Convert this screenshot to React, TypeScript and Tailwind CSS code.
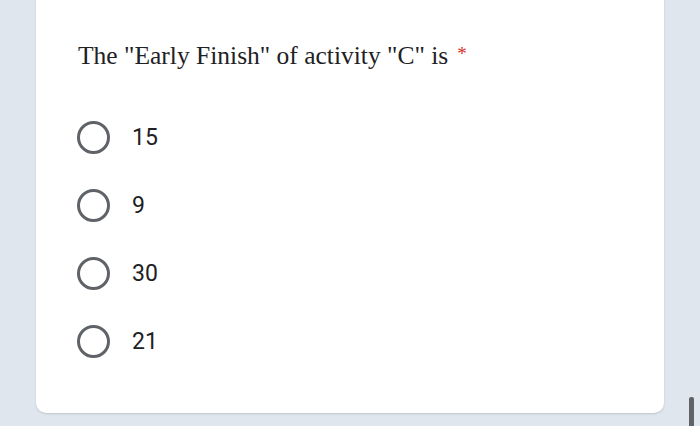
const options = ["15", "9", "30", "21"];

export default function App() {
  return (
    <div className="relative h-[426px] w-[700px] overflow-hidden bg-[#dfe6ed]">
      <div className="-mt-[10px] ml-[36px] h-[423px] w-[628px] rounded-[10px] bg-white pl-[41px] pt-[50px] shadow-[0_1px_2px_rgba(60,64,67,0.2)]">
        <h1
          className="text-[25.5px] leading-[32px] text-[#202124]"
          style={{ fontFamily: '"Liberation Serif", serif' }}
        >
          <span className="pl-[1px]">The "Early Finish" of activity "C" is</span>
          <span className="ml-[9px] align-top text-[19px] leading-[27px] text-[#d93025]">*</span>
        </h1>

        <div className="mt-[31px] flex flex-col">
          {options.map((opt) => (
            <label key={opt} className="flex h-[68px] items-center">
              <span className="h-[33px] w-[33px] shrink-0 rounded-full border-[3.5px] border-[#5f6368]" />
              <span
                className="ml-[22px] text-[23px] leading-none text-[#202124]"
                style={{ fontFamily: "Roboto, sans-serif" }}
              >
                {opt}
              </span>
            </label>
          ))}
        </div>
      </div>

      {/* scrollbar thumb */}
      <div className="absolute left-[689px] top-[397px] h-[32px] w-[5px] rounded-[2px] bg-[#5f6368]" />
    </div>
  );
}
